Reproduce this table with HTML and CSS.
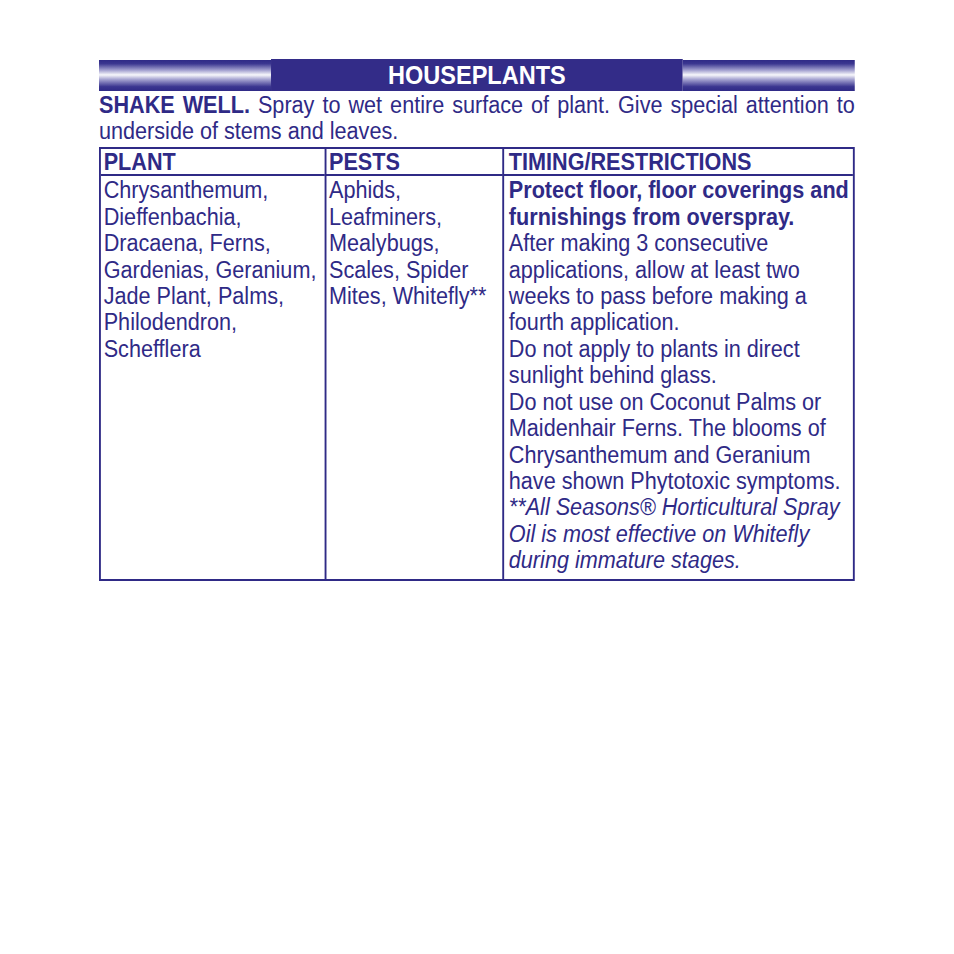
FILE: index.html
```html
<!DOCTYPE html>
<html lang="en">
<head>
<meta charset="utf-8">
<title>Houseplants</title>
<link rel="stylesheet" href="styles.css">
</head>
<body>
<div class="sheet">
  <div class="banner">
    <div class="banner-side"></div>
    <div class="banner-title">HOUSEPLANTS</div>
    <div class="banner-side"></div>
  </div>
  <p class="intro"><b>SHAKE WELL.</b> Spray to wet entire surface of plant. Give special attention to underside of stems and leaves.</p>
  <div class="grid">
    <div class="cell head">PLANT</div>
    <div class="cell head sep">PESTS</div>
    <div class="cell head sep wide">TIMING/RESTRICTIONS</div>
    <div class="cell body">Chrysanthemum,<br>Dieffenbachia,<br>Dracaena, Ferns,<br>Gardenias, Geranium,<br>Jade Plant, Palms,<br>Philodendron,<br>Schefflera</div>
    <div class="cell body sep">Aphids,<br>Leafminers,<br>Mealybugs,<br>Scales, Spider<br>Mites, Whitefly**</div>
    <div class="cell body sep wide"><b>Protect floor, floor coverings and<br>furnishings from overspray.</b><br>After making 3 consecutive<br>applications, allow at least two<br>weeks to pass before making a<br>fourth application.<br>Do not apply to plants in direct<br>sunlight behind glass.<br>Do not use on Coconut Palms or<br>Maidenhair Ferns. The blooms of<br>Chrysanthemum and Geranium<br>have shown Phytotoxic symptoms.<br><i>**All Seasons® Horticultural Spray<br>Oil is most effective on Whitefly<br>during immature stages.</i></div>
  </div>
</div>
</body>
</html>
```
FILE: styles.css
```css
html, body {
  margin: 0;
  padding: 0;
  background: #ffffff;
}

body {
  font-family: "Liberation Sans", Arial, sans-serif;
  color: #2f2a86;
}

.sheet {
  width: 804px;
  margin: 59px 0 0 99px;
  transform: scaleX(0.94);
  transform-origin: 0 0;
}

.banner {
  display: grid;
  grid-template-columns: 183px 1fr 183px;
  align-items: end;
  height: 32px;
}

.banner-side {
  height: 31px;
  background: linear-gradient(to bottom,
    #2f2a87 0%,
    #3b3690 12%,
    #a9a7d3 34%,
    #f7f7fb 48%,
    #a9a7d3 62%,
    #3b3690 86%,
    #2f2a87 100%);
}

.banner-title {
  height: 32px;
  background: #332c88;
  color: #ffffff;
  font-weight: bold;
  font-size: 25px;
  line-height: 33px;
  text-align: center;
}

.intro {
  margin: 1px 0 0 0;
  font-size: 23px;
  line-height: 26.4px;
  text-align: justify;
}

.grid {
  margin-top: 2px;
  display: grid;
  grid-template-columns: 237.7px 189.3px 373px;
  border: 2px solid #2f2a86;
  width: max-content;
}

.cell {
  font-size: 23px;
  padding-left: 3px;
  white-space: nowrap;
}

.wide {
  padding-left: 5px;
}

.sep {
  border-left: 2px solid #2f2a86;
}

.head {
  font-weight: bold;
  line-height: 24.4px;
  padding-top: 1px;
  border-bottom: 2px solid #2f2a86;
}

.body {
  line-height: 26.43px;
  padding-top: 1px;
  padding-bottom: 5.3px;
}
```
